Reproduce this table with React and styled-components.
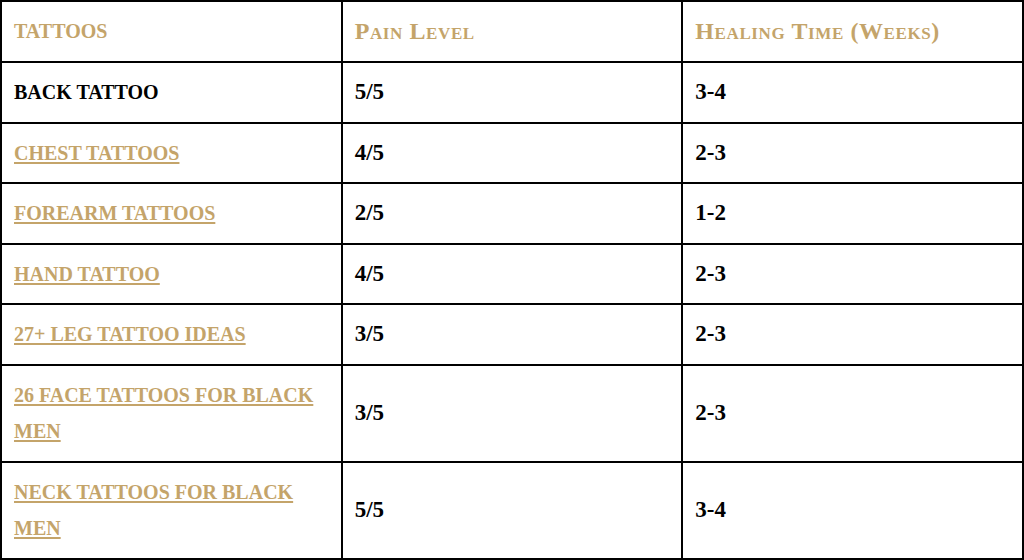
import React from "react";
import styled, { createGlobalStyle } from "styled-components";

const GlobalStyle = createGlobalStyle`
  html, body {
    margin: 0;
    padding: 0;
    background: #ffffff;
  }
  body {
    font-family: "Liberation Serif", "Times New Roman", serif;
  }
`;

const GOLD = "#c4a46a";

const Table = styled.table`
  width: 1024px;
  table-layout: fixed;
  border-collapse: collapse;
  border: 2px solid #000000;
`;

const HeadCell = styled.th`
  padding: 11px 12px;
  border: 2px solid #000000;
  text-align: left;
  vertical-align: middle;
  line-height: 37px;
  color: ${GOLD};
  font-weight: 700;
  font-size: ${(p) => (p.$upper ? "20px" : "24px")};
  font-variant: ${(p) => (p.$upper ? "normal" : "small-caps")};
  letter-spacing: ${(p) => (p.$upper ? "0" : "0.6px")};
`;

const Cell = styled.td`
  padding: 11px 12px;
  border: 2px solid #000000;
  vertical-align: middle;
  line-height: 36.5px;
  color: #000000;
  font-size: 20px;
  font-weight: 700;
`;

const NumCell = styled(Cell)`
  font-size: 23px;
`;

const TattooLink = styled.a`
  color: ${GOLD};
  text-decoration: underline;
  text-decoration-thickness: 2px;
  text-underline-offset: 2px;
`;

const rows = [
  { name: "BACK TATTOO", link: false, pain: "5/5", heal: "3-4" },
  { name: "CHEST TATTOOS", link: true, pain: "4/5", heal: "2-3" },
  { name: "FOREARM TATTOOS", link: true, pain: "2/5", heal: "1-2" },
  { name: "HAND TATTOO", link: true, pain: "4/5", heal: "2-3" },
  { name: "27+ LEG TATTOO IDEAS", link: true, pain: "3/5", heal: "2-3" },
  { name: "26 FACE TATTOOS FOR BLACK MEN", link: true, pain: "3/5", heal: "2-3" },
  { name: "NECK TATTOOS FOR BLACK MEN", link: true, pain: "5/5", heal: "3-4" },
];

export default function App() {
  return (
    <>
      <GlobalStyle />
      <Table>
        <thead>
          <tr>
            <HeadCell $upper>TATTOOS</HeadCell>
            <HeadCell>Pain Level</HeadCell>
            <HeadCell>Healing Time (Weeks)</HeadCell>
          </tr>
        </thead>
        <tbody>
          {rows.map((r) => (
            <tr key={r.name}>
              <Cell>
                {r.link ? <TattooLink href="#">{r.name}</TattooLink> : r.name}
              </Cell>
              <NumCell>{r.pain}</NumCell>
              <NumCell>{r.heal}</NumCell>
            </tr>
          ))}
        </tbody>
      </Table>
    </>
  );
}
